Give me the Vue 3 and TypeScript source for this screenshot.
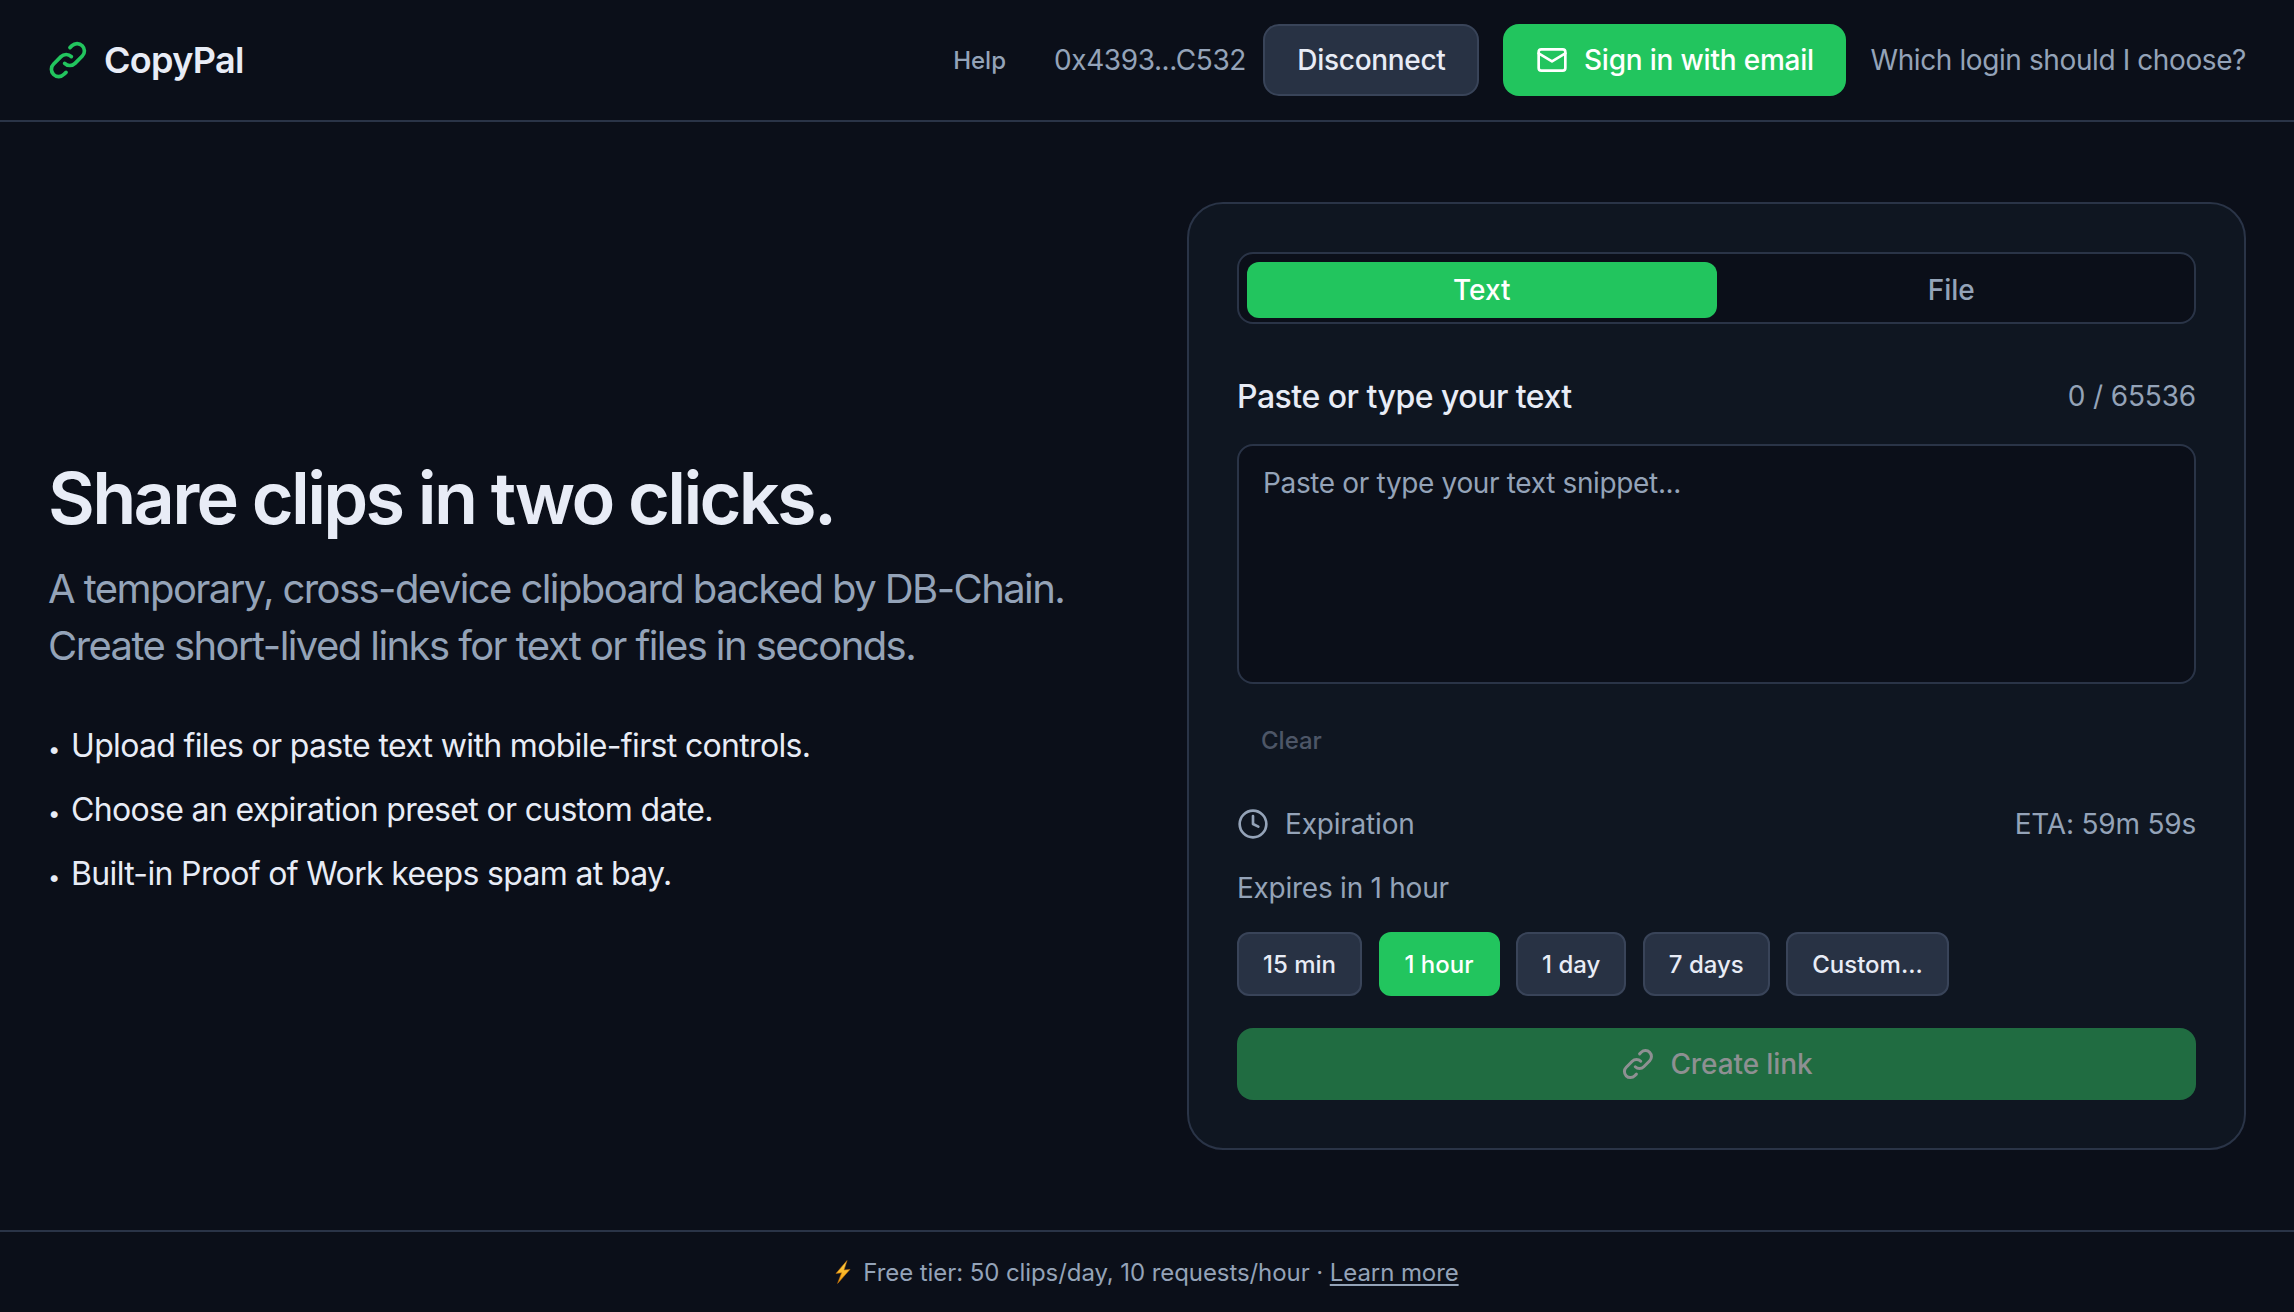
<script setup lang="ts">
import { ref } from 'vue';

const maxChars = 65536;
const mode = ref<'text' | 'file'>('text');
const snippet = ref('');
const presets = ['15 min', '1 hour', '1 day', '7 days', 'Custom...'];
const activePreset = ref('1 hour');
const bullets = [
  'Upload files or paste text with mobile-first controls.',
  'Choose an expiration preset or custom date.',
  'Built-in Proof of Work keeps spam at bay.',
];
</script>

<template>
  <div class="page">
    <header class="topbar">
      <div class="brand">
        <svg class="brand-icon" viewBox="0 0 24 24" fill="none" stroke="currentColor" stroke-width="2" stroke-linecap="round" stroke-linejoin="round">
          <path d="M13.828 10.172a4 4 0 0 0-5.656 0l-4 4a4 4 0 1 0 5.656 5.656l1.102-1.101" />
          <path d="M10.172 13.828a4 4 0 0 0 5.656 0l4-4a4 4 0 0 0-5.656-5.656l-1.1 1.1" />
        </svg>
        <span>CopyPal</span>
      </div>
      <nav class="nav">
        <a class="help">Help</a>
        <span class="address">0x4393...C532</span>
        <button class="btn-disconnect">Disconnect</button>
        <button class="btn-email">
          <svg viewBox="0 0 24 24" fill="none" stroke="currentColor" stroke-width="2" stroke-linecap="round" stroke-linejoin="round">
            <rect x="2" y="4" width="20" height="16" rx="2" />
            <path d="m22 7-10 6L2 7" />
          </svg>
          Sign in with email
        </button>
        <a class="which">Which login should I choose?</a>
      </nav>
    </header>

    <main class="main">
      <section class="hero">
        <h1>Share clips in two clicks.</h1>
        <p class="lead">A temporary, cross-device clipboard backed by DB-Chain.<br />Create short-lived links for text or files in seconds.</p>
        <ul>
          <li v-for="b in bullets" :key="b"><span class="dot">•</span>{{ b }}</li>
        </ul>
      </section>

      <section class="card">
        <div class="tabs">
          <button :class="{ active: mode === 'text' }" @click="mode = 'text'">Text</button>
          <button :class="{ active: mode === 'file' }" @click="mode = 'file'">File</button>
        </div>

        <div class="label-row">
          <label for="snippet">Paste or type your text</label>
          <span class="count">{{ snippet.length }} / {{ maxChars }}</span>
        </div>
        <textarea id="snippet" v-model="snippet" placeholder="Paste or type your text snippet..."></textarea>
        <button class="clear" @click="snippet = ''">Clear</button>

        <div class="exp-row">
          <div class="exp-label">
            <svg viewBox="0 0 24 24" fill="none" stroke="currentColor" stroke-width="2" stroke-linecap="round" stroke-linejoin="round">
              <circle cx="12" cy="12" r="10" />
              <path d="M12 6v6l4 2" />
            </svg>
            Expiration
          </div>
          <span class="eta">ETA: 59m 59s</span>
        </div>
        <p class="expires">Expires in 1 hour</p>
        <div class="presets">
          <button v-for="p in presets" :key="p" :class="{ active: p === activePreset }" @click="activePreset = p">{{ p }}</button>
        </div>

        <button class="create" disabled>
          <svg viewBox="0 0 24 24" fill="none" stroke="currentColor" stroke-width="2" stroke-linecap="round" stroke-linejoin="round">
            <path d="M13.828 10.172a4 4 0 0 0-5.656 0l-4 4a4 4 0 1 0 5.656 5.656l1.102-1.101" />
            <path d="M10.172 13.828a4 4 0 0 0 5.656 0l4-4a4 4 0 0 0-5.656-5.656l-1.1 1.1" />
          </svg>
          Create link
        </button>
      </section>
    </main>

    <footer class="footer">
      <svg class="bolt" viewBox="0 0 16 24">
        <defs>
          <linearGradient id="boltFill" x1="0" y1="0" x2="0" y2="1">
            <stop offset="0" stop-color="#ffd54a" />
            <stop offset="1" stop-color="#f59e0b" />
          </linearGradient>
        </defs>
        <path d="M12 .6 1 13.4l5.6-.6L2.6 23.4 15 9.4l-6 .7z" fill="url(#boltFill)" stroke="#c2710c" stroke-width="0.6" stroke-linejoin="round" />
      </svg>
      <span class="tier">Free tier: 50 clips/day, 10 requests/hour · <a>Learn more</a></span>
    </footer>
  </div>
</template>

<style>
body {
  background: #0b0f19;
}
</style>

<style scoped>
.page {
  width: 2294px;
  height: 1312px;
  display: flex;
  flex-direction: column;
  background: #0b0f19;
  color: #e8ecf6;
  font-family: Inter, "Liberation Sans", sans-serif;
}

button {
  font-family: inherit;
  cursor: pointer;
}

.topbar {
  height: 122px;
  box-sizing: border-box;
  flex-shrink: 0;
  display: flex;
  align-items: center;
  justify-content: space-between;
  padding: 0 48px;
  border-bottom: 2px solid #2a3447;
}

.brand {
  display: flex;
  align-items: center;
  gap: 14px;
  font-size: 36px;
  font-weight: 600;
  letter-spacing: -0.7px;
}

.brand-icon {
  width: 44px;
  height: 44px;
  margin-left: -2px;
  color: #22c55e;
}

.nav {
  display: flex;
  align-items: center;
  font-size: 28px;
  color: #94a3b8;
  letter-spacing: -0.4px;
}

.help {
  font-size: 24px;
  font-weight: 500;
  letter-spacing: 0;
  margin-right: 48px;
}

.address {
  margin-right: 17.5px;
}

.btn-disconnect {
  height: 72px;
  width: 216px;
  border-radius: 16px;
  border: 2px solid #394459;
  background: #283244;
  color: #e8ecf6;
  font-size: 28px;
  font-weight: 500;
  letter-spacing: -0.3px;
  margin-right: 24px;
}

.btn-email {
  height: 72px;
  width: 343px;
  border: none;
  border-radius: 16px;
  background: #22c55e;
  color: #fff;
  font-size: 28px;
  font-weight: 500;
  letter-spacing: -0.2px;
  display: flex;
  align-items: center;
  justify-content: center;
  gap: 16px;
  margin-right: 24px;
}

.btn-email svg {
  width: 32px;
  height: 32px;
}

.main {
  flex: 1;
  display: grid;
  grid-template-columns: 1fr 1059px;
  gap: 48px;
  align-items: center;
  padding: 0 48px;
}

h1 {
  margin: 0;
  font-size: 72px;
  line-height: 80px;
  font-weight: 600;
  letter-spacing: -2.7px;
}

.lead {
  margin: 22px 0 0;
  font-size: 40px;
  line-height: 57px;
  color: #94a3b8;
  letter-spacing: -1.58px;
}

ul {
  list-style: none;
  margin: 52px 0 0;
  padding: 0;
  display: flex;
  flex-direction: column;
  gap: 24px;
  font-size: 32px;
  line-height: 40px;
  letter-spacing: -0.66px;
}

.dot {
  display: inline-block;
  width: 23px;
  font-size: 22px;
  line-height: 1;
}

.card {
  box-sizing: border-box;
  height: 948px;
  padding: 48px;
  border: 2px solid #2a3447;
  border-radius: 36px;
  background: #0f1621;
  display: flex;
  flex-direction: column;
}

.tabs {
  display: flex;
  padding: 8px 8px 4px;
  height: 72px;
  flex-shrink: 0;
  box-sizing: border-box;
  border: 2px solid #2a3447;
  border-radius: 16px;
  background: #0b0f19;
}

.tabs button {
  flex: 1;
  border: none;
  border-radius: 12px;
  background: transparent;
  color: #94a3b8;
  font-size: 28px;
  font-weight: 500;
}

.tabs button.active {
  background: #22c55e;
  color: #fff;
}

.label-row {
  display: flex;
  justify-content: space-between;
  align-items: center;
  margin-top: 50px;
  height: 44px;
}

.label-row label {
  font-size: 32px;
  font-weight: 500;
  letter-spacing: -0.5px;
}

.count {
  font-size: 28px;
  color: #94a3b8;
  letter-spacing: -0.15px;
}

textarea {
  display: block;
  box-sizing: border-box;
  width: 100%;
  height: 240px;
  flex-shrink: 0;
  margin-top: 26px;
  padding: 19px 24px;
  border: 2px solid #2a3447;
  border-radius: 16px;
  background: #0b0f19;
  color: #e8ecf6;
  font-family: inherit;
  font-size: 28px;
  line-height: 36px;
  letter-spacing: -0.35px;
  resize: none;
  outline: none;
}

textarea::placeholder {
  color: #94a3b8;
  opacity: 1;
}

.clear {
  align-self: flex-start;
  margin-top: 32px;
  padding: 0 24px;
  height: 48px;
  border: none;
  background: transparent;
  color: #4d5667;
  font-size: 24px;
  font-weight: 500;
}

.exp-row {
  display: flex;
  justify-content: space-between;
  align-items: center;
  margin-top: 40px;
  height: 40px;
  font-size: 28px;
  color: #94a3b8;
  letter-spacing: -0.2px;
}

.exp-label {
  display: flex;
  align-items: center;
  gap: 16px;
}

.exp-label svg {
  width: 32px;
  height: 32px;
}

.expires {
  margin: 24px 0 0;
  font-size: 28px;
  line-height: 40px;
  color: #94a3b8;
  letter-spacing: -0.25px;
}

.presets {
  display: flex;
  gap: 16.5px;
  margin-top: 24px;
}

.presets button {
  height: 64px;
  padding: 0 24px;
  border: 2px solid #394459;
  border-radius: 12px;
  background: #283244;
  color: #e8ecf6;
  font-size: 24px;
  font-weight: 500;
}

.presets button.active {
  border-color: #22c55e;
  background: #22c55e;
  color: #fff;
}

.create {
  margin-top: 32px;
  height: 72px;
  flex-shrink: 0;
  border: none;
  border-radius: 16px;
  background: #206c41;
  color: #8e9092;
  font-size: 28px;
  font-weight: 500;
  letter-spacing: -0.1px;
  display: flex;
  align-items: center;
  justify-content: center;
  gap: 14px;
  cursor: not-allowed;
}

.create svg {
  width: 36px;
  height: 36px;
}

.footer {
  height: 82px;
  flex-shrink: 0;
  box-sizing: border-box;
  border-top: 2px solid #2a3447;
  display: flex;
  align-items: center;
  justify-content: center;
  gap: 12px;
  font-size: 24px;
  color: #94a3b8;
}

.tier {
  letter-spacing: -0.08px;
}

.bolt {
  width: 16px;
  height: 24px;
}

.footer a {
  text-decoration: underline;
  text-underline-offset: 3px;
}
</style>
